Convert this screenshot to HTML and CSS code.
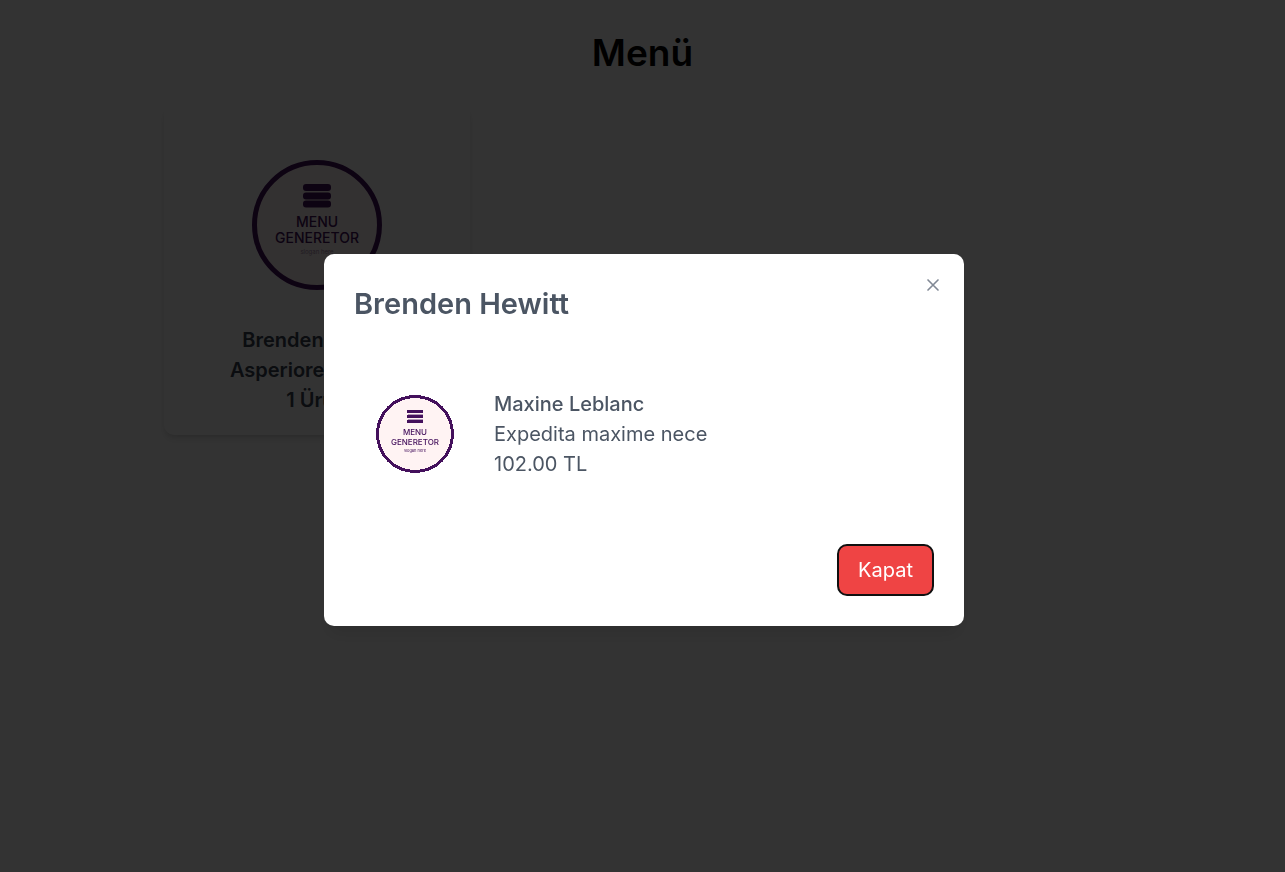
FILE: index.html
```html
<!DOCTYPE html>
<html lang="tr">
<head>
<meta charset="utf-8">
<meta name="viewport" content="width=device-width, initial-scale=1">
<title>Menü</title>
<link rel="stylesheet" href="styles.css">
</head>
<body>
<main class="page">
  <h1 class="page-title">Menü</h1>
  <div class="grid">
    <article class="card">
      <svg class="card-logo" viewBox="0 0 130 130" role="img" aria-label="Menu Generetor">
        <circle cx="65" cy="65" r="62.5" fill="#fff3f3" stroke="#44105c" stroke-width="5"/>
        <g fill="#44105c">
          <rect x="51" y="24" width="28" height="7" rx="3"/>
          <rect x="51" y="32.5" width="28" height="7" rx="3"/>
          <rect x="51" y="40.5" width="28" height="7" rx="3"/>
          <text class="logo-word" x="65" y="67">MENU</text>
          <text class="logo-word" x="65" y="83">GENERETOR</text>
          <text class="logo-tag" x="65" y="94">slogan here</text>
        </g>
      </svg>
      <div class="card-text">
        <p>Brenden Hewitt</p>
        <p>Asperiores nostru</p>
        <p>1 Ürün</p>
      </div>
    </article>
  </div>
</main>
<div class="overlay">
  <section class="dialog" role="dialog" aria-modal="true" aria-labelledby="dialog-title">
    <button class="close" type="button" aria-label="Close">
      <svg viewBox="0 0 24 24" width="20" height="20" fill="none" stroke="currentColor" stroke-width="2" stroke-linecap="round"><path d="M18 6 6 18M6 6l12 12"/></svg>
    </button>
    <h2 class="dialog-title" id="dialog-title">Brenden Hewitt</h2>
    <div class="product">
      <svg class="product-logo" viewBox="0 0 78 78" role="img" aria-label="Menu Generetor">
        <circle cx="39" cy="39" r="37.5" fill="#fff3f3" stroke="#44105c" stroke-width="3" shape-rendering="crispEdges"/>
        <g fill="#44105c">
          <rect x="31" y="15" width="16" height="3"/>
          <rect x="31" y="20" width="16" height="3"/>
          <rect x="31" y="25" width="16" height="3"/>
          <path d="M32 19h15v1H32zM32 24h15v1H32z" opacity=".4"/>
          <text class="mini-word" x="39" y="40">MENU</text>
          <text class="mini-word" x="39" y="50">GENERETOR</text>
          <text class="mini-tag" x="39" y="57">slogan here</text>
        </g>
      </svg>
      <div class="product-text">
        <p class="product-name">Maxine Leblanc</p>
        <p>Expedita maxime nece</p>
        <p>102.00 TL</p>
      </div>
    </div>
    <div class="actions"><button class="dismiss" type="button">Kapat</button></div>
  </section>
</div>
</body>
</html>
```
FILE: styles.css
```css
* { box-sizing: border-box; }
body {
  margin: 0;
  background: #fff;
  font-family: Inter, "Liberation Sans", sans-serif;
  font-size: 20px;
  line-height: 30px;
}
h1, h2, p { margin: 0; }
.page { padding: 30px 20px; }
.page-title {
  font-size: 37px;
  line-height: 45px;
  font-weight: 600;
  text-align: center;
}
.grid {
  display: grid;
  grid-template-columns: repeat(3, 1fr);
  gap: 20px;
  max-width: 958px;
  margin: 30px auto 0;
}
.card {
  display: flex;
  flex-direction: column;
  align-items: center;
  gap: 35px;
  padding: 55px 20px 20px;
  border-radius: 10px;
  background: #fff;
  box-shadow: 0 5px 8px -1px rgba(0, 0, 0, .1), 0 3px 5px -2px rgba(0, 0, 0, .1);
}
.card-logo { width: 130px; height: 130px; }
.card-text {
  color: #374151;
  font-weight: 600;
  text-align: center;
}
.logo-word { font: 500 14px Inter, sans-serif; text-anchor: middle; }
.logo-tag { font: 6px Inter, sans-serif; text-anchor: middle; opacity: .5; }
.mini-word { font: 500 8px Inter, sans-serif; text-anchor: middle; }
.mini-tag { font: 4px Inter, sans-serif; text-anchor: middle; }
.overlay {
  position: fixed;
  inset: 0;
  display: flex;
  align-items: center;
  justify-content: center;
  padding: 8px 0 0 3px;
  background: rgba(0, 0, 0, .8);
}
.dialog {
  position: relative;
  width: 100%;
  max-width: 640px;
  padding: 30px;
  border-radius: 10px;
  background: #fff;
  color: #4b5563;
  box-shadow: 0 12px 18px -4px rgba(0, 0, 0, .1), 0 5px 8px -5px rgba(0, 0, 0, .1);
}
.dialog-title {
  font-size: 29px;
  line-height: 40px;
  font-weight: 600;
}
.close {
  position: absolute;
  top: 21px;
  right: 21px;
  display: flex;
  padding: 0;
  border: 0;
  background: none;
  color: #818995;
}
.product {
  display: flex;
  align-items: center;
  gap: 40px;
  padding: 65px 22px;
}
.product-logo { width: 78px; height: 78px; flex: none; }
.product-name { font-weight: 500; }
.actions { display: flex; justify-content: flex-end; }
.dismiss {
  padding: 9px 19px;
  border: 2px solid #101010;
  border-radius: 10px;
  background: #ef4444;
  color: #fff;
  font: inherit;
}
```
